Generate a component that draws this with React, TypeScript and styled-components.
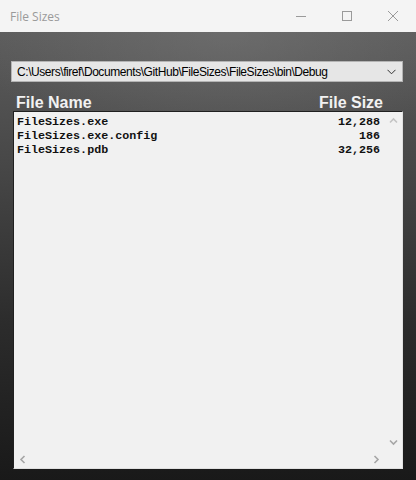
import React from "react";
import styled, { createGlobalStyle } from "styled-components";

const Global = createGlobalStyle`
  html, body { margin: 0; padding: 0; }
  body { width: 416px; height: 480px; overflow: hidden; font-family: "Liberation Sans", Arial, sans-serif; }
  #root { width: 416px; height: 480px; }
`;

const Window = styled.div`
  width: 416px;
  height: 480px;
  display: flex;
  flex-direction: column;
  background: #f4f4f4;
`;

const TitleBar = styled.div`
  height: 32px;
  flex: 0 0 32px;
  display: flex;
  align-items: center;
  background: #f4f4f4;
`;

const Title = styled.div`
  flex: 1;
  padding-left: 10px;
  font-family: "Open Sans", "Noto Sans", sans-serif;
  font-size: 12px;
  color: #9a9a9a;
`;

const CtrlButton = styled.div`
  width: 46px;
  height: 32px;
  display: flex;
  align-items: center;
  justify-content: center;
`;

const Client = styled.div`
  flex: 1;
  display: flex;
  flex-direction: column;
  padding: 29px 13px 11px 11px;
  background:
    radial-gradient(ellipse 260px 120px at 55% 0%, rgba(120,120,120,0.55), rgba(120,120,120,0) 100%),
    linear-gradient(to bottom, #5c5c5c 0%, #474747 30%, #2c2c2c 65%, #191919 100%);
`;

const Combo = styled.div`
  height: 19px;
  border: 1px solid #b4b4b4;
  background: #e6e6e6;
  display: flex;
  align-items: center;
  padding-left: 5px;
  padding-right: 6px;
`;

const ComboText = styled.div`
  flex: 1;
  font-family: "Liberation Sans", Arial, sans-serif;
  font-size: 12px;
  letter-spacing: -0.43px;
  color: #000;
  white-space: nowrap;
  overflow: hidden;
`;

const HeaderRow = styled.div`
  display: flex;
  justify-content: space-between;
  padding: 10px 20px 0 5px;
  height: 19px;
  align-items: flex-end;
`;

const HeaderText = styled.div`
  font-family: "Liberation Sans", Arial, sans-serif;
  font-weight: bold;
  font-size: 16px;
  line-height: 16px;
  color: #f2f2f2;
`;

const ListBox = styled.div`
  margin-left: 2px;
  flex: 1;
  border: 1px solid #1a1a1a;
  border-color: #202020 #e0e0e0 #e0e0e0 #202020;
  background: #f1f1f1;
  display: grid;
  grid-template-columns: 1fr 17px;
  grid-template-rows: 1fr 17px;
`;

const Items = styled.div`
  padding: 3px 5px 0 3px;
  display: flex;
  flex-direction: column;
`;

const Item = styled.div`
  display: flex;
  justify-content: space-between;
  font-family: "Liberation Mono", "Courier New", monospace;
  font-weight: bold;
  font-size: 11.7px;
  line-height: 14px;
  color: #111;
  white-space: pre;
`;

const VScroll = styled.div`
  display: flex;
  flex-direction: column;
  justify-content: space-between;
  align-items: center;
  padding: 4px 0 4px;
`;

const HScroll = styled.div`
  display: flex;
  justify-content: space-between;
  align-items: center;
  padding: 0 4px 0 4px;
`;

const Corner = styled.div``;

const Chevron = ({ dir, color = "#a6a6a6" }: { dir: "up" | "down" | "left" | "right"; color?: string }) => {
  const rot = { up: 180, down: 0, left: 90, right: -90 }[dir];
  return (
    <svg width="9" height="9" viewBox="0 0 9 9" style={{ transform: `rotate(${rot}deg)` }}>
      <path d="M1 2.5 L4.5 6 L8 2.5" fill="none" stroke={color} strokeWidth="1.6" />
    </svg>
  );
};

const files = [
  { name: "FileSizes.exe", size: "12,288" },
  { name: "FileSizes.exe.config", size: "186" },
  { name: "FileSizes.pdb", size: "32,256" },
];

export default function App() {
  return (
    <Window>
      <Global />
      <TitleBar>
        <Title>File Sizes</Title>
        <CtrlButton>
          <svg width="10" height="10" viewBox="0 0 10 10">
            <line x1="0" y1="5.5" x2="10" y2="5.5" stroke="#9a9a9a" strokeWidth="1" />
          </svg>
        </CtrlButton>
        <CtrlButton>
          <svg width="10" height="10" viewBox="0 0 10 10">
            <rect x="0.5" y="0.5" width="9" height="9" fill="none" stroke="#9a9a9a" strokeWidth="1" />
          </svg>
        </CtrlButton>
        <CtrlButton>
          <svg width="10" height="10" viewBox="0 0 10 10">
            <path d="M0 0 L10 10 M10 0 L0 10" stroke="#9a9a9a" strokeWidth="1" />
          </svg>
        </CtrlButton>
      </TitleBar>
      <Client>
        <Combo>
          <ComboText>C:\Users\firef\Documents\GitHub\FileSizes\FileSizes\bin\Debug</ComboText>
          <svg width="9" height="6" viewBox="0 0 9 6">
            <path d="M0.5 0.8 L4.5 4.8 L8.5 0.8" fill="none" stroke="#333" strokeWidth="1" />
          </svg>
        </Combo>
        <HeaderRow>
          <HeaderText>File Name</HeaderText>
          <HeaderText>File Size</HeaderText>
        </HeaderRow>
        <ListBox>
          <Items>
            {files.map((f) => (
              <Item key={f.name}>
                <span>{f.name}</span>
                <span>{f.size}</span>
              </Item>
            ))}
          </Items>
          <VScroll>
            <Chevron dir="up" color="#c4c4c4" />
            <Chevron dir="down" />
          </VScroll>
          <HScroll>
            <Chevron dir="left" />
            <Chevron dir="right" />
          </HScroll>
          <Corner />
        </ListBox>
      </Client>
    </Window>
  );
}
